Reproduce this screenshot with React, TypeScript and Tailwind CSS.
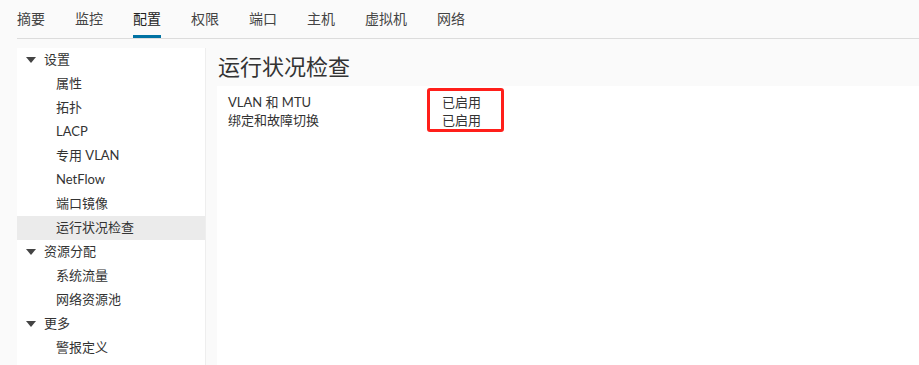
import React from 'react';

const TABS = ['摘要', '监控', '配置', '权限', '端口', '主机', '虚拟机', '网络'];
const ACTIVE_TAB = '配置';

type Node = { label: string; children: string[] };

const TREE: Node[] = [
  { label: '设置', children: ['属性', '拓扑', 'LACP', '专用 VLAN', 'NetFlow', '端口镜像', '运行状况检查'] },
  { label: '资源分配', children: ['系统流量', '网络资源池'] },
  { label: '更多', children: ['警报定义'] },
];
const SELECTED = '运行状况检查';

const ROWS = [
  { name: 'VLAN 和 MTU', value: '已启用' },
  { name: '绑定和故障切换', value: '已启用' },
];

function Caret() {
  return (
    <svg width="10" height="6" viewBox="0 0 10 6" className="mr-[8px] shrink-0">
      <path d="M0 0 H10 L5 6 Z" fill="#444" />
    </svg>
  );
}

export default function App() {
  return (
    <div
      className="flex h-[365px] w-[919px] flex-col overflow-hidden bg-[#fafafa] text-[#333]"
      style={{ fontFamily: 'Lato, "Noto Sans CJK SC", sans-serif' }}
    >
      {/* tabs */}
      <div className="ml-[17px] flex h-[39px] gap-[30px] border-b border-[#dcdcdc]">
        {TABS.map((t) => (
          <div
            key={t}
            className={`flex h-full items-start pt-[9px] text-[14px] leading-[20px] ${
              t === ACTIVE_TAB ? 'border-b-[3px] border-[#0072a3] text-[#222]' : 'border-b-[3px] border-transparent text-[#444]'
            }`}
          >
            {t}
          </div>
        ))}
      </div>

      <div className="mt-[9px] flex min-h-0 flex-1">
        {/* sidebar */}
        <div className="ml-[17px] w-[189px] shrink-0 border-r border-[#eeeeee] bg-white">
          {TREE.map((n) => (
            <div key={n.label}>
              <div className="flex h-[24px] items-center pl-[9px] text-[13px]">
                <Caret />
                {n.label}
              </div>
              {n.children.map((c) => (
                <div
                  key={c}
                  className={`flex h-[24px] items-center pl-[39px] text-[13px] ${
                    c === SELECTED ? 'bg-[#ebebeb]' : ''
                  }`}
                >
                  {c}
                </div>
              ))}
            </div>
          ))}
        </div>

        {/* main */}
        <div className="ml-[11px] flex min-w-0 flex-1 flex-col">
          <h1 className="h-[38px] pl-[1px] pt-[4px] text-[22px] leading-[30px] text-[#333]">运行状况检查</h1>
          <div className="flex-1 bg-white pl-[11px] pt-[8px]">
            <div className="relative">
              {ROWS.map((r) => (
                <div key={r.name} className="flex h-[18px] items-center text-[13px]">
                  <span className="w-[214px] shrink-0">{r.name}</span>
                  <span>{r.value}</span>
                </div>
              ))}
              <div className="pointer-events-none absolute left-[199px] top-[-6px] h-[44px] w-[77px] rounded-[3px] border-[3px] border-[#ff1f1a]" />
            </div>
          </div>
        </div>
      </div>
    </div>
  );
}
